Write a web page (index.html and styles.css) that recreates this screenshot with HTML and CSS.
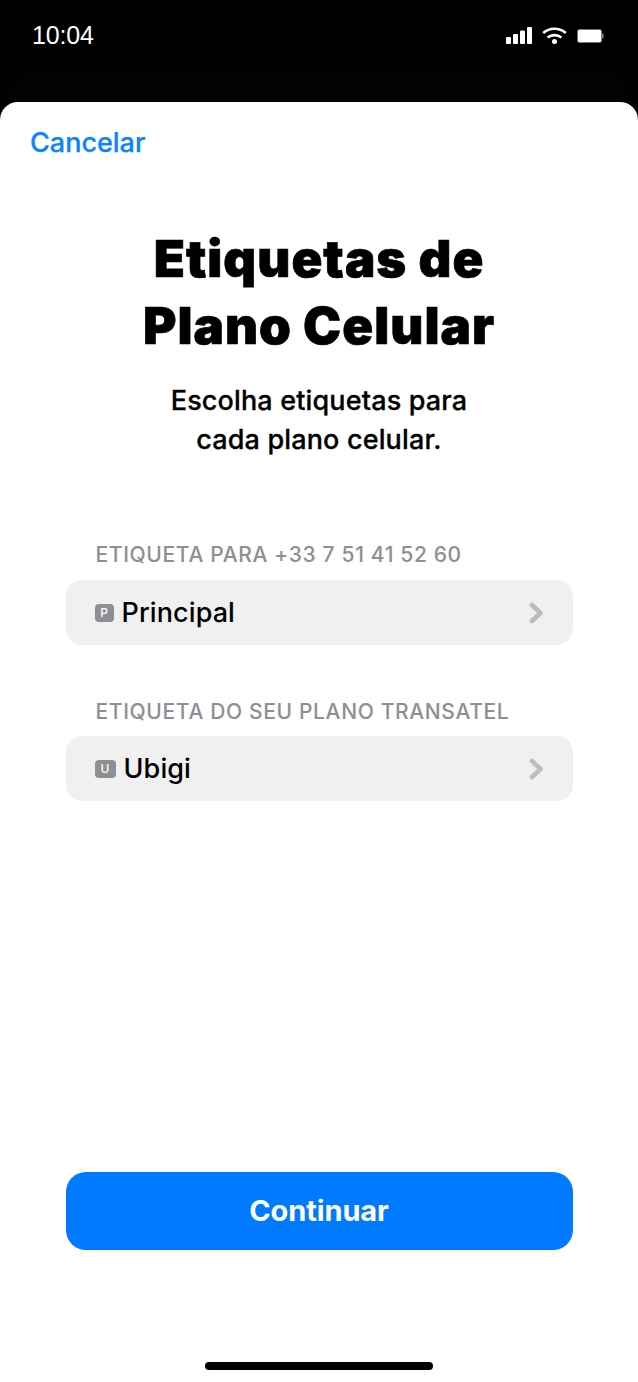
FILE: index.html
```html
<!DOCTYPE html>
<html lang="pt">
<head>
<meta charset="utf-8">
<title>Etiquetas de Plano Celular</title>
<link rel="stylesheet" href="styles.css">
</head>
<body>
<div class="phone">
  <header class="status">
    <span class="time">10:04</span>
    <div class="status-icons">
      <svg class="ic-signal" width="26" height="17" viewBox="0 0 26 17"><rect x="0" y="10" width="5" height="7" rx="1" fill="#fff"/><rect x="7" y="7" width="5" height="10" rx="1" fill="#fff"/><rect x="14" y="3.500" width="5" height="13.500" rx="1" fill="#fff"/><rect x="21" y="0" width="5" height="17" rx="1" fill="#fff"/></svg>
      <svg class="ic-wifi" width="25" height="17" viewBox="0 0 25 17"><path d="M1.200 6C7.500 .4 17.500 .4 23.800 6" fill="none" stroke="#fff" stroke-width="2.600"/><path d="M5.600 10.500C9.500 7.300 15.500 7.300 19.400 10.500" fill="none" stroke="#fff" stroke-width="2.600"/><circle cx="12.500" cy="14.500" r="2.500" fill="#fff"/></svg>
      <svg class="ic-batt" width="27" height="14" viewBox="0 0 27 14"><rect x=".5" y=".5" width="24" height="13" rx="2" fill="#fff" stroke="#777"/><rect x="25" y="4.500" width="1.500" height="5" fill="#888"/></svg>
    </div>
  </header>
  <div class="backcard"></div>
  <main class="sheet">
    <a class="cancel">Cancelar</a>
    <h1 class="title">Etiquetas de<br>Plano Celular</h1>
    <p class="sub">Escolha etiquetas para<br>cada plano celular.</p>
    <section class="group">
      <h2 class="label">ETIQUETA PARA +33 7 51 41 52 60</h2>
      <div class="row">
        <span class="badge badge-p">P</span><span class="name">Principal</span>
        <svg class="chev" width="16" height="22" viewBox="0 0 16 22"><path d="M3 3l8.500 8-8.500 8" fill="none" stroke="#bcbcbe" stroke-width="4.500" stroke-linecap="round" stroke-linejoin="round"/></svg>
      </div>
    </section>
    <section class="group group-2">
      <h2 class="label">ETIQUETA DO SEU PLANO TRANSATEL</h2>
      <div class="row">
        <span class="badge badge-u">U</span><span class="name">Ubigi</span>
        <svg class="chev" width="16" height="22" viewBox="0 0 16 22"><path d="M3 3l8.500 8-8.500 8" fill="none" stroke="#bcbcbe" stroke-width="4.500" stroke-linecap="round" stroke-linejoin="round"/></svg>
      </div>
    </section>
    <div class="spacer"></div>
    <button class="continue">Continuar</button>
    <div class="home"></div>
  </main>
</div>
</body>
</html>
```
FILE: styles.css
```css
* { box-sizing: border-box; margin: 0; padding: 0; }
html, body { width: 638px; height: 1382px; overflow: hidden; background: #000; }
body { font-family: Inter, "Liberation Sans", sans-serif; }
.phone { position: relative; width: 638px; height: 1382px; display: flex; flex-direction: column; }
.status { height: 102px; flex: none; display: flex; justify-content: space-between; align-items: flex-start; padding: 20px 34px 0 32px; color: #fff; }
.time { font-family: "Liberation Sans", sans-serif; font-size: 25px; line-height: 30px; letter-spacing: -.15px; }
.status-icons { display: flex; align-items: center; gap: 10px; padding-top: 7px; }
.backcard { position: absolute; left: 8px; right: 8px; top: 71px; height: 60px; background: #020202; border-radius: 22px 22px 0 0; }
.sheet { position: relative; flex: 1; background: #fff; border-radius: 18px 18px 0 0; display: flex; flex-direction: column; align-items: center; padding-top: 26px; }
.cancel { align-self: flex-start; margin-left: 30px; color: #0a84ff; font-size: 27px; line-height: 30px; font-weight: 500; -webkit-text-stroke: .25px #0a84ff; }
.title { margin-top: 67px; font-size: 51px; line-height: 67px; font-weight: 900; color: #000; text-align: center; letter-spacing: 1px; -webkit-text-stroke: .7px #000; }
.sub { margin-top: 22px; font-size: 27px; line-height: 39px; font-weight: 500; color: #000; text-align: center; letter-spacing: .15px; -webkit-text-stroke: .3px #000; }
.group { width: 507px; margin-top: 81px; }
.group-2 { margin-top: 52px; }
.label { padding-left: 30px; font-size: 21px; line-height: 30px; font-weight: 500; color: #8e8e93; letter-spacing: .65px; }
.row { margin-top: 10px; height: 65px; background: #f0f0f1; border-radius: 16px; display: flex; align-items: center; padding: 0 28px 0 29px; }
.group-2 .row { margin-top: 9px; }
.badge { height: 18px; border-radius: 4px; background: #8e8e93; color: #fff; font-size: 12px; font-weight: 500; display: flex; align-items: center; justify-content: center; }
.badge-p { width: 19px; }
.badge-u { width: 21px; }
.name { margin-left: 8px; font-size: 27px; font-weight: 500; color: #000; letter-spacing: .1px; }
.chev { margin-left: auto; }
.spacer { flex: 1; }
.continue { width: 507px; height: 78px; border: 0; border-radius: 20px; background: #007aff; color: #fff; font-family: inherit; font-size: 29px; font-weight: 700; letter-spacing: -.1px; padding-bottom: 2px; }
.home { width: 228px; height: 8px; border-radius: 4px; background: #000; margin: 112px 0 12px; }
```
